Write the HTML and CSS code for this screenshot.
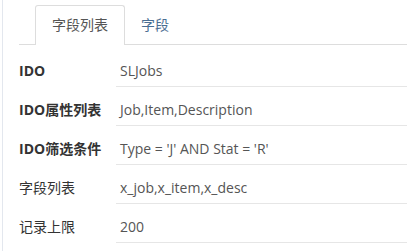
FILE: index.html
```html
<!DOCTYPE html>
<html>
<head>
<meta charset="utf-8">
<link rel="stylesheet" href="styles.css">
</head>
<body>
<div class="panel">
  <ul class="tabs">
    <li class="tab active">字段列表</li>
    <li class="tab link">字段</li>
  </ul>
  <div class="form">
    <div class="row">
      <div class="label bold">IDO</div>
      <div class="value">SLJobs</div>
    </div>
    <div class="row">
      <div class="label bold">IDO属性列表</div>
      <div class="value">Job,Item,Description</div>
    </div>
    <div class="row">
      <div class="label bold">IDO筛选条件</div>
      <div class="value">Type = 'J' AND Stat = 'R'</div>
    </div>
    <div class="row">
      <div class="label">字段列表</div>
      <div class="value">x_job,x_item,x_desc</div>
    </div>
    <div class="row">
      <div class="label">记录上限</div>
      <div class="value">200</div>
    </div>
  </div>
</div>
</body>
</html>
```
FILE: styles.css
```css
html, body {
  margin: 0;
  padding: 0;
  background: #fff;
}
body {
  font-family: "Open Sans", "Noto Sans CJK SC", sans-serif;
  font-size: 14px;
  color: #333;
  height: 251px;
  overflow: hidden;
}
.panel {
  margin-left: 2px;
  border-left: 1px solid #e3e7ee;
  height: 251px;
  padding-left: 16px;
  padding-top: 5px;
  box-sizing: border-box;
}
.tabs {
  list-style: none;
  margin: 0;
  padding: 0 0 0 16px;
  display: flex;
  border-bottom: 1px solid #dddddd;
}
.tab {
  height: 38px;
  line-height: 37px;
  padding: 0 16px;
  border: 1px solid transparent;
  border-bottom: none;
  margin-right: -1px;
  margin-bottom: -1px;
  border-radius: 3px 3px 0 0;
}
.tab.active {
  border-color: #dddddd;
  background: #fff;
  color: #555;
  height: 39px;
}
.tab.link {
  color: #4a6e93;
}
.form {
  padding-top: 3px;
}
.row {
  display: flex;
}
.label {
  width: 97px;
  flex: none;
  padding-top: 13px;
  line-height: 20px;
  color: #333;
}
.label.bold {
  font-weight: 700;
}
.value {
  flex: 1;
  padding: 13px 0 5px 4px;
  line-height: 20px;
  color: #555;
  border-bottom: 1px solid #e6e6e6;
}
```
